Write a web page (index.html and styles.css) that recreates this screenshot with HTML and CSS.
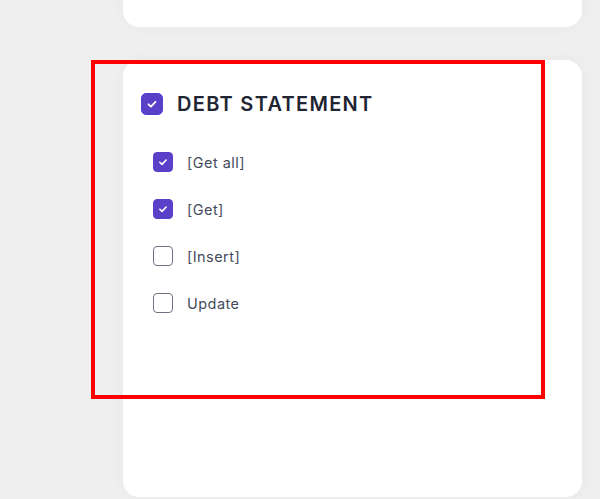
FILE: index.html
```html
<!DOCTYPE html>
<html>
<head>
<meta charset="utf-8">
<link rel="stylesheet" href="styles.css">
</head>
<body>
<div class="page">
  <div class="card card-top"></div>
  <div class="card card-main">
    <label class="title-row">
      <span class="box checked big"><svg viewBox="0 0 20 20"><path d="M6.5 10.3l2.4 2.3 4.6-4.8" fill="none" stroke="#fff" stroke-width="1.8" stroke-linecap="round" stroke-linejoin="round"/></svg></span>
      <span class="title">DEBT STATEMENT</span>
    </label>
    <ul class="perms">
      <li class="perm"><span class="box checked"><svg viewBox="0 0 20 20"><path d="M6.5 10.3l2.4 2.3 4.6-4.8" fill="none" stroke="#fff" stroke-width="1.8" stroke-linecap="round" stroke-linejoin="round"/></svg></span><span class="label">[Get all]</span></li>
      <li class="perm"><span class="box checked"><svg viewBox="0 0 20 20"><path d="M6.5 10.3l2.4 2.3 4.6-4.8" fill="none" stroke="#fff" stroke-width="1.8" stroke-linecap="round" stroke-linejoin="round"/></svg></span><span class="label">[Get]</span></li>
      <li class="perm"><span class="box"></span><span class="label">[Insert]</span></li>
      <li class="perm"><span class="box"></span><span class="label">Update</span></li>
    </ul>
  </div>
  <div class="highlight"></div>
</div>
</body>
</html>
```
FILE: styles.css
```css
html, body {
  margin: 0;
  padding: 0;
}
body {
  background: #efefef;
  font-family: Inter, "Noto Sans", sans-serif;
  width: 600px;
  height: 499px;
  overflow: hidden;
}
.page {
  position: relative;
  display: flex;
  flex-direction: column;
  gap: 33px;
  padding-left: 123px;
  width: 459px;
}
.card {
  background: #ffffff;
  border-radius: 16px;
  box-shadow: 0 0 18px rgba(0, 0, 0, 0.035);
}
.card-top {
  height: 100px;
  margin-top: -73px;
}
.card-main {
  height: 437px;
  box-sizing: border-box;
  padding: 32px 18px 0 18px;
}
.title-row {
  display: flex;
  align-items: center;
  gap: 14px;
}
.box {
  width: 20px;
  height: 20px;
  box-sizing: border-box;
  border: 1.5px solid #6b7480;
  border-radius: 4px;
  display: flex;
  align-items: center;
  justify-content: center;
  flex-shrink: 0;
}
.box svg {
  width: 20px;
  height: 20px;
}
.box.checked {
  background: #5a3fc8;
  border-color: #5a3fc8;
}
.box.big {
  width: 22px;
  height: 22px;
  border-radius: 5px;
}
.title {
  font-size: 20px;
  font-weight: 600;
  color: #1f2533;
  letter-spacing: 1.3px;
}
.perms {
  list-style: none;
  margin: 36px 0 0 0;
  padding: 0 0 0 12px;
  display: flex;
  flex-direction: column;
  gap: 27px;
}
.perm {
  display: flex;
  align-items: center;
  gap: 14px;
  height: 20px;
}
.label {
  font-size: 14.5px;
  color: #454c5c;
  letter-spacing: 0.45px;
}
.highlight {
  position: absolute;
  left: 91px;
  top: 60px;
  width: 454px;
  height: 339px;
  box-sizing: border-box;
  border: 4px solid #ff0000;
}
```
